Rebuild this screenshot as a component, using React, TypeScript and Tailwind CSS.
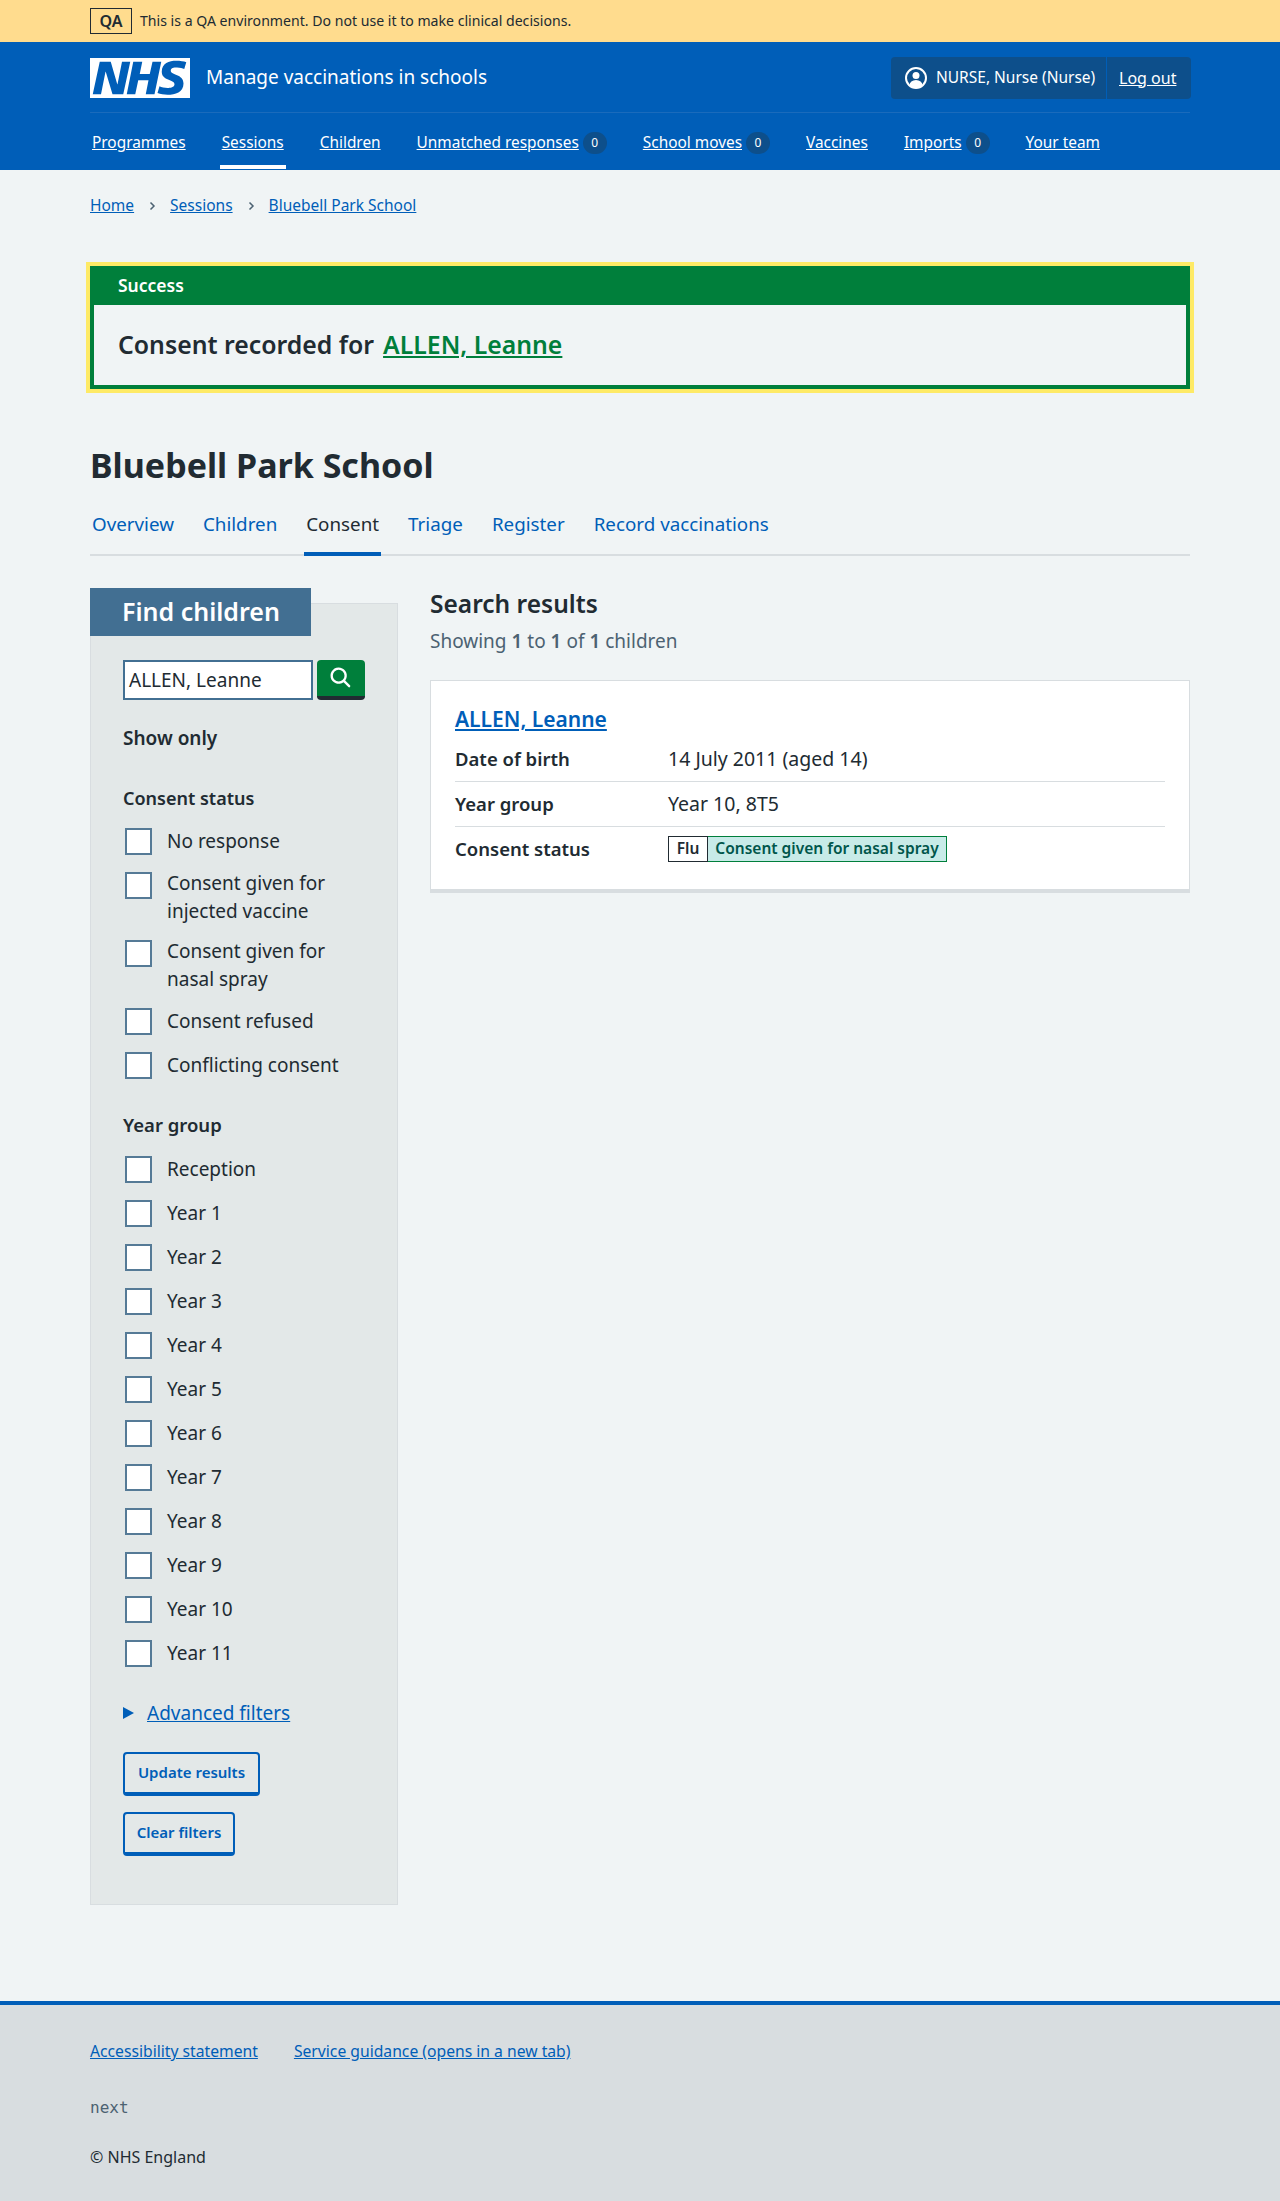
const navItems = [
  { label: "Programmes" },
  { label: "Sessions", active: true },
  { label: "Children" },
  { label: "Unmatched responses", count: 0 },
  { label: "School moves", count: 0 },
  { label: "Vaccines" },
  { label: "Imports", count: 0 },
  { label: "Your team" },
];

const tabs = ["Overview", "Children", "Consent", "Triage", "Register", "Record vaccinations"];

const consentOptions = [
  ["No response"],
  ["Consent given for", "injected vaccine"],
  ["Consent given for", "nasal spray"],
  ["Consent refused"],
  ["Conflicting consent"],
];

const yearOptions = [
  "Reception",
  "Year 1",
  "Year 2",
  "Year 3",
  "Year 4",
  "Year 5",
  "Year 6",
  "Year 7",
  "Year 8",
  "Year 9",
  "Year 10",
  "Year 11",
];

const NhsLogo = () => (
  <svg viewBox="0 0 40 16" className="h-10 w-[100px] shrink-0">
    <path fill="#fff" d="M0 0h40v16H0z" />
    <path
      fill="#005eb8"
      d="M3.9 1.5h4.4l2.6 9h.1l1.8-9h3.3l-2.8 13H9l-2.7-9h-.1l-1.8 9H1.1M17.3 1.5h3.6l-1 4.9h4L25 1.5h3.5l-2.7 13h-3.5l1.1-5.6h-4.1l-1.2 5.6h-3.4M37.7 4.4c-.7-.3-1.6-.6-2.9-.6-1.4 0-2.5.2-2.5 1.3 0 1.8 5.1 1.2 5.1 5.1 0 3.6-3.3 4.5-6.4 4.5-1.3 0-2.9-.3-4-.7l.8-2.7c.7.4 2.1.7 3.2.7s2.8-.2 2.8-1.5c0-2.1-5.1-1.3-5.1-5 0-3.4 2.9-4.4 5.8-4.4 1.6 0 3.1.2 4 .6"
    />
  </svg>
);

const UserIcon = () => (
  <svg viewBox="0 0 22 22" className="h-[22px] w-[22px] shrink-0">
    <defs>
      <clipPath id="user-clip">
        <circle cx="11" cy="11" r="10" />
      </clipPath>
    </defs>
    <circle cx="11" cy="11" r="10" fill="none" stroke="#fff" strokeWidth="2" />
    <circle cx="11" cy="8.5" r="3.5" fill="#fff" />
    <ellipse cx="11" cy="18.5" rx="6.5" ry="5.5" fill="#fff" clipPath="url(#user-clip)" />
  </svg>
);

const Chevron = () => (
  <svg viewBox="0 0 12 12" className="h-3 w-3 shrink-0 fill-none stroke-[#4c6272] stroke-[1.5]">
    <path d="M4.5 2.5 8 6l-3.5 3.5" />
  </svg>
);

const Count = ({ value }: { value: number }) => (
  <span className="ml-1 flex h-[22px] w-6 items-center justify-center rounded-full bg-[#0d4f8b] text-[12px] font-normal text-white">
    {value}
  </span>
);

const Checkbox = ({ lines }: { lines: string[] }) => (
  <div className={`flex gap-[15px] ${lines.length > 1 ? "h-[52px]" : "h-7"}`}>
    <span className="ml-0.5 mt-px h-[27px] w-[27px] shrink-0 border-2 border-[#557a96] bg-white" />
    <span className={`text-[19px] leading-7 text-[#212b32] ${lines.length > 1 ? "-mt-0.5" : ""}`}>
      {lines.map((line) => (
        <span key={line} className="block whitespace-nowrap">
          {line}
        </span>
      ))}
    </span>
  </div>
);

const SecondaryButton = ({ children, width }: { children: string; width: string }) => (
  <button className={`h-11 rounded border-2 border-b-4 border-[#005eb8] pb-0.5 text-[15px] font-semibold text-[#005eb8] ${width}`}>
    {children}
  </button>
);

const SummaryRow = ({ label, children, last }: { label: string; children: React.ReactNode; last?: boolean }) => (
  <div className={`flex h-[45px] items-center pb-px ${last ? "" : "border-b border-[#d8dde0]"}`}>
    <span className="w-[213px] text-[18.5px] font-semibold">{label}</span>
    {children}
  </div>
);

export default function App() {
  return (
    <div className="min-h-[2201px] bg-[#f0f4f5] font-['Noto_Sans',sans-serif] text-[#212b32]">
      <div className="h-[42px] bg-[#ffdc8e]">
        <div className="mx-auto flex h-full w-[1100px] items-center gap-2">
          <span className="flex h-[26px] w-[42px] items-center justify-center border border-[#212b32] text-[16px] font-semibold">
            QA
          </span>
          <span className="text-[14.1px]">This is a QA environment. Do not use it to make clinical decisions.</span>
        </div>
      </div>

      <header className="h-[128px] bg-[#005eb8] text-white">
        <div className="mx-auto w-[1100px]">
          <div className="flex h-[71px] items-center justify-between border-b border-[#1a6bbc] pt-px">
            <div className="flex items-center gap-4">
              <NhsLogo />
              <span className="text-[19px]">Manage vaccinations in schools</span>
            </div>
            <div className="-mr-px flex h-[42px] w-[300px] items-center rounded bg-[#0d4f8b] text-[15.5px]">
              <div className="flex h-full w-[216px] items-center gap-[9px] border-r border-[#005eb8] pl-3.5">
                <UserIcon />
                <span className="whitespace-nowrap">NURSE, Nurse (Nurse)</span>
              </div>
              <a className="ml-3 text-[16px] underline">Log out</a>
            </div>
          </div>
          <nav className="flex h-14 gap-8 text-[15.4px]">
            {navItems.map((item) => (
              <div
                key={item.label}
                className={`flex items-center border-b-4 px-0.5 pt-[7px] ${item.active ? "border-white" : "border-transparent"}`}
              >
                <a className="whitespace-nowrap underline">{item.label}</a>
                {item.count !== undefined && <Count value={item.count} />}
              </div>
            ))}
          </nav>
        </div>
      </header>

      <main className="mx-auto w-[1100px]">
        <div className="flex h-[92px] items-center gap-3 pb-5 text-[15.5px] text-[#005eb8]">
          <a className="underline">Home</a>
          <Chevron />
          <a className="underline">Sessions</a>
          <Chevron />
          <a className="underline">Bluebell Park School</a>
        </div>

        <section className="mt-1 h-[123px] border-4 border-[#007f3b] outline-4 outline-[#feea66]">
          <div className="flex h-[35px] items-center bg-[#007f3b] px-6 pb-1 text-[17.5px] font-semibold text-white">
            Success
          </div>
          <p className="flex h-[80px] items-center gap-[9px] px-6 text-[24.8px] font-semibold">
            Consent recorded for <a className="text-[#007f3b] underline">ALLEN, Leanne</a>
          </p>
        </section>

        <h1 className="mt-[53px] text-[34px] font-bold leading-[46px]">Bluebell Park School</h1>

        <div className="mt-4 flex h-[52px] gap-[25px] border-b-2 border-[#d8dde0] text-[18.8px] text-[#005eb8]">
          {tabs.map((tab) => (
            <a
              key={tab}
              className={`-mb-0.5 flex items-center whitespace-nowrap border-b-4 px-0.5 pb-2 ${
                tab === "Consent" ? "border-[#005eb8] text-[#212b32]" : "border-transparent"
              }`}
            >
              {tab}
            </a>
          ))}
        </div>

        <div className="mt-8 flex gap-8">
          <aside className="w-[308px] shrink-0">
            <h2 className="relative z-10 flex h-12 w-[221px] items-center bg-[#426f92] pl-8 text-[25px] font-semibold text-white">
              Find children
            </h2>
            <div className="-mt-[33px] h-[1302px] border border-[#d8dde0] bg-[#e3e8e8] pl-8 pt-14">
              <div className="flex gap-1">
                <div className="flex h-10 w-[190px] items-center border-2 border-[#426f92] bg-white pl-1 text-[19px]">
                  ALLEN, Leanne
                </div>
                <button className="flex h-10 w-12 items-center justify-center rounded border-b-4 border-[#212b32] bg-[#007f3b]">
                  <svg viewBox="0 0 24 24" className="h-7 w-7 fill-white">
                    <path d="M19.71 18.29l-4.11-4.1a7 7 0 1 0-1.41 1.41l4.1 4.11a1 1 0 0 0 1.42 0 1 1 0 0 0 0-1.42zM5 10a5 5 0 1 1 5 5 5 5 0 0 1-5-5z" />
                  </svg>
                </button>
              </div>

              <h3 className="mt-6 text-[19px] font-semibold leading-7">Show only</h3>

              <h3 className="mt-8 text-[18px] font-semibold leading-7">Consent status</h3>
              <div className="mt-[15px] flex flex-col gap-4">
                {consentOptions.map((lines) => (
                  <Checkbox key={lines.join(" ")} lines={lines} />
                ))}
              </div>

              <h3 className="mt-8 text-[18.5px] font-semibold leading-7">Year group</h3>
              <div className="mt-4 flex flex-col gap-4">
                {yearOptions.map((year) => (
                  <Checkbox key={year} lines={[year]} />
                ))}
              </div>

              <div className="mt-8 flex items-center gap-[13px] text-[19px] leading-7 text-[#005eb8]">
                <span className="h-0 w-0 border-y-[6.5px] border-l-[11px] border-y-transparent border-l-[#005eb8]" />
                <a className="underline">Advanced filters</a>
              </div>

              <div className="mt-[25px] flex flex-col items-start gap-4">
                <SecondaryButton width="w-[137px]">Update results</SecondaryButton>
                <SecondaryButton width="w-[112px]">Clear filters</SecondaryButton>
              </div>
            </div>
          </aside>

          <div className="flex-1">
            <h2 className="text-[24.5px] font-semibold leading-8">Search results</h2>
            <p className="mt-[7px] text-[19px] leading-7 text-[#4c6272]">
              Showing <b className="font-semibold">1</b> to <b className="font-semibold">1</b> of{" "}
              <b className="font-semibold">1</b> children
            </p>
            <div className="mt-[25px] h-[213px] border border-b-4 border-[#d8dde0] bg-white px-6 pt-6">
              <a className="text-[21px] font-semibold leading-7 text-[#005eb8] underline">ALLEN, Leanne</a>
              <div className="mt-1">
                <SummaryRow label="Date of birth">
                  <span className="text-[19.5px]">14 July 2011 (aged 14)</span>
                </SummaryRow>
                <SummaryRow label="Year group">
                  <span className="text-[19.5px]">Year 10, 8T5</span>
                </SummaryRow>
                <SummaryRow label="Consent status" last>
                  <span className="flex h-[26px] text-[15.5px] font-semibold">
                    <span className="flex w-10 items-center justify-center border border-[#212b32] bg-white">Flu</span>
                    <span className="flex w-[239px] items-center justify-center whitespace-nowrap border border-l-0 border-[#007f3b] bg-[#c8ebe8] text-[#00564b]">
                      Consent given for nasal spray
                    </span>
                  </span>
                </SummaryRow>
              </div>
            </div>
          </div>
        </div>
      </main>

      <footer className="mt-24 h-[200px] border-t-4 border-[#005eb8] bg-[#d8dde0]">
        <div className="mx-auto w-[1100px] pt-[33px] text-[16px]">
          <div className="flex h-7 items-center gap-9 text-[15.7px] text-[#005eb8]">
            <a className="underline">Accessibility statement</a>
            <a className="underline">Service guidance (opens in a new tab)</a>
          </div>
          <p className="mt-7 font-['DejaVu_Sans_Mono',monospace] leading-7 text-[#4c6272]">next</p>
          <p className="mt-[21px] leading-7">© NHS England</p>
        </div>
      </footer>
    </div>
  );
}
